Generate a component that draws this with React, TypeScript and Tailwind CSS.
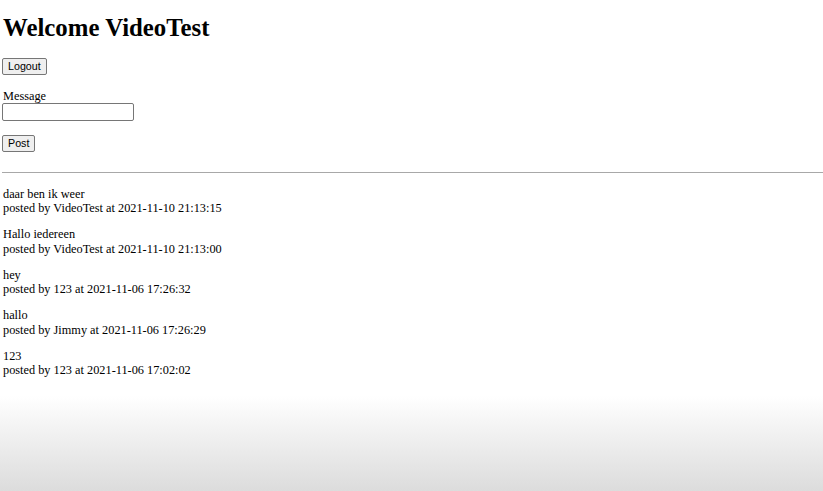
import React from "react";

const posts = [
  { message: "daar ben ik weer", user: "VideoTest", at: "2021-11-10 21:13:15" },
  { message: "Hallo iedereen", user: "VideoTest", at: "2021-11-10 21:13:00" },
  { message: "hey", user: "123", at: "2021-11-06 17:26:32" },
  { message: "hallo", user: "Jimmy", at: "2021-11-06 17:26:29" },
  { message: "123", user: "123", at: "2021-11-06 17:02:02" },
];

function PlainButton({ children }: { children: React.ReactNode }) {
  return (
    <button
      type="button"
      className="flex h-[17px] items-center rounded-[2px] border border-[#767676] bg-[#efefef] px-[5px] font-['Liberation_Sans',Arial,sans-serif] text-[10.7px] leading-none text-black"
    >
      {children}
    </button>
  );
}

export default function App() {
  return (
    <div className="relative h-[491px] w-[823px] overflow-hidden bg-white font-['Liberation_Serif','Times_New_Roman',serif] text-black">
      <div className="flex flex-col items-start pl-[2px]">
        {/* Header */}
        <h1 className="mt-[13px] pl-px text-[24.8px] leading-[29px] font-bold">Welcome VideoTest</h1>

        <div className="mt-[16px]">
          <PlainButton>Logout</PlainButton>
        </div>

        {/* Post form */}
        <label className="mt-[14px] pl-px text-[12.3px] leading-[14px]">Message</label>
        <input
          type="text"
          className="h-[18px] w-[132px] rounded-[2px] border border-[#767676] bg-white"
        />
        <div className="mt-[14px]">
          <PlainButton>Post</PlainButton>
        </div>

        <div className="mt-[20px] h-px w-full bg-[#a8a8a8]" />

        {/* Messages */}
        <div className="mt-[13.5px] flex flex-col gap-[11.4px] pl-px text-[12.3px] leading-[14.6px]">
          {posts.map((p, i) => (
            <div key={i}>
              <div>{p.message}</div>
              <div>
                posted by {p.user} at {p.at}
              </div>
            </div>
          ))}
        </div>
      </div>

      {/* player fade over the bottom */}
      <div className="pointer-events-none absolute inset-x-0 bottom-0 h-[95px] bg-gradient-to-b from-white to-[#dcdcdc]" />
    </div>
  );
}
